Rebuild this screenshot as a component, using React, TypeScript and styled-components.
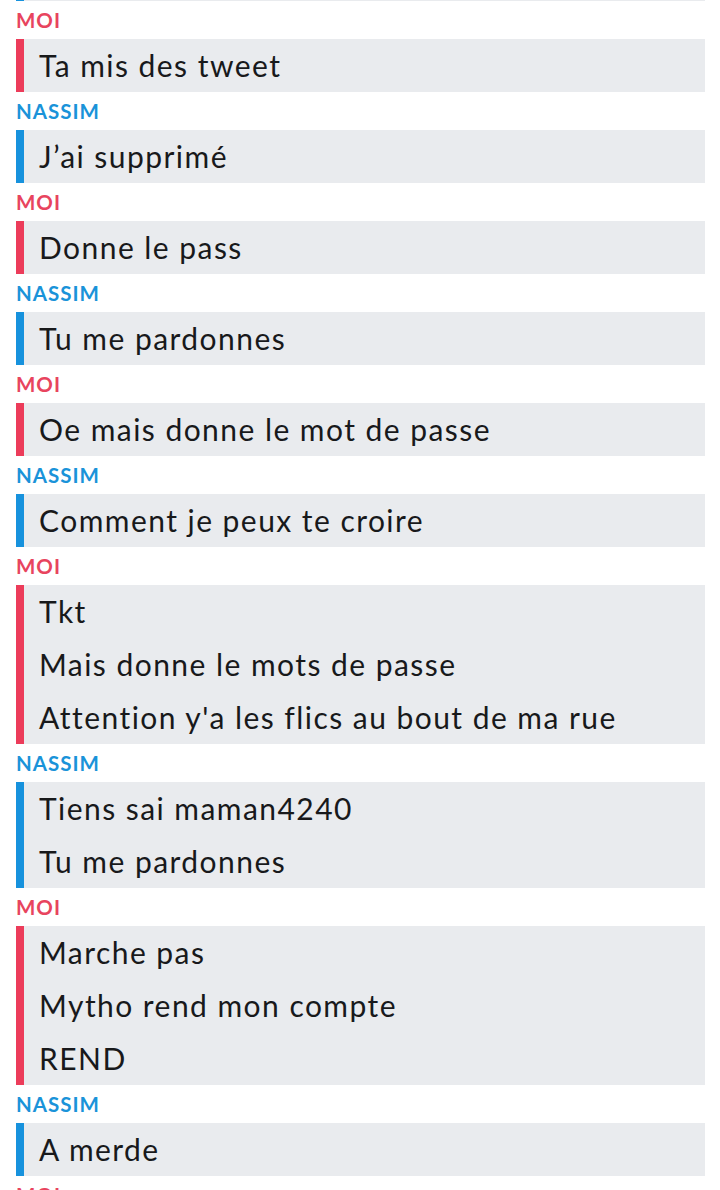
import React from 'react';
import styled, {createGlobalStyle} from 'styled-components';

// Type (TS)
type Sender = 'moi' | 'nassim'

type MessageType = {
    from: Sender
    lines: string[]
}

const colors: Record<Sender, { label: string, bar: string }> = {
    moi: {label: '#e8445e', bar: '#ec3c5a'},
    nassim: {label: '#1a93d9', bar: '#1792dd'},
}

const names: Record<Sender, string> = {
    moi: 'MOI',
    nassim: 'NASSIM',
}

const messages: MessageType[] = [
    {from: 'moi', lines: ['Ta mis des tweet']},
    {from: 'nassim', lines: ['J’ai supprimé']},
    {from: 'moi', lines: ['Donne le pass']},
    {from: 'nassim', lines: ['Tu me pardonnes']},
    {from: 'moi', lines: ['Oe mais donne le mot de passe']},
    {from: 'nassim', lines: ['Comment je peux te croire']},
    {from: 'moi', lines: ['Tkt', 'Mais donne le mots de passe', "Attention y'a les flics au bout de ma rue"]},
    {from: 'nassim', lines: ['Tiens sai maman4240', 'Tu me pardonnes']},
    {from: 'moi', lines: ['Marche pas', 'Mytho rend mon compte', 'REND']},
    {from: 'nassim', lines: ['A merde']},
]

// FC
const App: React.FC = () => {
    return (
        <>
            <GlobalStyle/>
            <StyledChat>
                {/* end of the previous bubble, scrolled out of view */}
                <StyledBubbleEdge from="nassim"/>
                {messages.map((m, i) => (
                    <StyledGroup key={i}>
                        <StyledLabel from={m.from}>{names[m.from]}</StyledLabel>
                        <StyledBubble from={m.from}>
                            {m.lines.map((line, j) => <StyledLine key={j}>{line}</StyledLine>)}
                        </StyledBubble>
                    </StyledGroup>
                ))}
                <StyledLabel from="moi">{names.moi}</StyledLabel>
            </StyledChat>
        </>
    );
};

export default App;

// Style
const GlobalStyle = createGlobalStyle`
  body {
    margin: 0;
    background: #ffffff;
    overflow: hidden;
    font-family: Lato, "Open Sans", sans-serif;
  }
`
const StyledChat = styled.div`
  display: flex;
  flex-direction: column;
  width: 720px;
  height: 1190px;
  padding: 0 15px 0 16px;
  box-sizing: border-box;
  overflow: hidden;
`
const StyledGroup = styled.div`
  display: flex;
  flex-direction: column;
`
const StyledBubbleEdge = styled.div<{ from: Sender }>`
  flex-shrink: 0;
  height: 1px;
  background: #e9ebee;
  border-left: 8px solid ${props => colors[props.from].bar};
`
const StyledLabel = styled.div<{ from: Sender }>`
  flex-shrink: 0;
  height: 38px;
  line-height: 38px;
  font-size: 20.5px;
  font-weight: 700;
  letter-spacing: 1px;
  color: ${props => colors[props.from].label};
`
const StyledBubble = styled.div<{ from: Sender }>`
  display: flex;
  flex-direction: column;
  background: #e9ebee;
  border-left: 8px solid ${props => colors[props.from].bar};
  padding-left: 15px;
`
const StyledLine = styled.div`
  height: 53px;
  line-height: 53px;
  font-size: 30px;
  letter-spacing: 1.45px;
  color: #18191b;
  white-space: nowrap;
`
